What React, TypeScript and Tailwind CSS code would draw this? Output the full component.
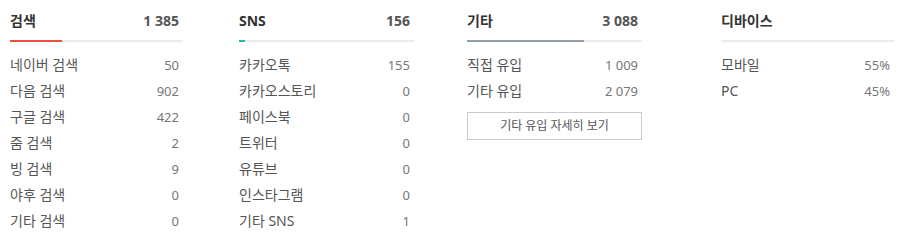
import React from 'react';

interface Row {
  label: string;
  value: string;
}

interface StatColumnProps {
  title: string;
  total?: string;
  barColor?: string;
  barPercent?: number;
  rows: Row[];
  className?: string;
  children?: React.ReactNode;
}

function StatColumn({ title, total, barColor, barPercent, rows, className, children }: StatColumnProps) {
  return (
    <div className={className}>
      <div className="flex h-[40px] items-center justify-between pr-[4px]">
        <span className="text-[14px] font-bold text-[#333]">{title}</span>
        {total && <span className="text-[14px] font-bold text-[#555]">{total}</span>}
      </div>
      <div className="h-[2px] w-full bg-[#ebebeb]">
        {barColor && (
          <div className={`h-full ${barColor}`} style={{ width: `${barPercent}%` }} />
        )}
      </div>
      <ul className="mt-[10px]">
        {rows.map((row) => (
          <li key={row.label} className="flex h-[26px] items-baseline justify-between pr-[4px] leading-[26px]">
            <span className="text-[14px] text-[#555]">{row.label}</span>
            <span className="text-[13px] text-[#777]">{row.value}</span>
          </li>
        ))}
      </ul>
      {children}
    </div>
  );
}

export default function App() {
  const search = 1385;
  const sns = 156;
  const etc = 3088;
  const sum = search + sns + etc;

  return (
    <div className="flex h-[244px] w-[922px] bg-white pl-[10px] font-['Noto_Sans','Noto_Sans_CJK_KR',sans-serif]">
      <StatColumn
        className="w-[173px]"
        title="검색"
        total="1 385"
        barColor="bg-[#f04e3e]"
        barPercent={(search / sum) * 100}
        rows={[
          { label: '네이버 검색', value: '50' },
          { label: '다음 검색', value: '902' },
          { label: '구글 검색', value: '422' },
          { label: '줌 검색', value: '2' },
          { label: '빙 검색', value: '9' },
          { label: '야후 검색', value: '0' },
          { label: '기타 검색', value: '0' },
        ]}
      />
      <StatColumn
        className="ml-[56px] w-[175px]"
        title="SNS"
        total="156"
        barColor="bg-[#1bbfa5]"
        barPercent={(sns / sum) * 100}
        rows={[
          { label: '카카오톡', value: '155' },
          { label: '카카오스토리', value: '0' },
          { label: '페이스북', value: '0' },
          { label: '트위터', value: '0' },
          { label: '유튜브', value: '0' },
          { label: '인스타그램', value: '0' },
          { label: '기타 SNS', value: '1' },
        ]}
      />
      <StatColumn
        className="ml-[53px] w-[175px]"
        title="기타"
        total="3 088"
        barColor="bg-[#939ea9]"
        barPercent={(etc / sum) * 100}
        rows={[
          { label: '직접 유입', value: '1 009' },
          { label: '기타 유입', value: '2 079' },
        ]}
      >
        <button className="mt-[8px] flex h-[28px] w-full items-center justify-center border border-[#c5ccd6] bg-white text-[12px] text-[#555]">
          기타 유입 자세히 보기
        </button>
      </StatColumn>
      <StatColumn
        className="ml-[79px] w-[173px]"
        title="디바이스"
        rows={[
          { label: '모바일', value: '55%' },
          { label: 'PC', value: '45%' },
        ]}
      />
    </div>
  );
}
